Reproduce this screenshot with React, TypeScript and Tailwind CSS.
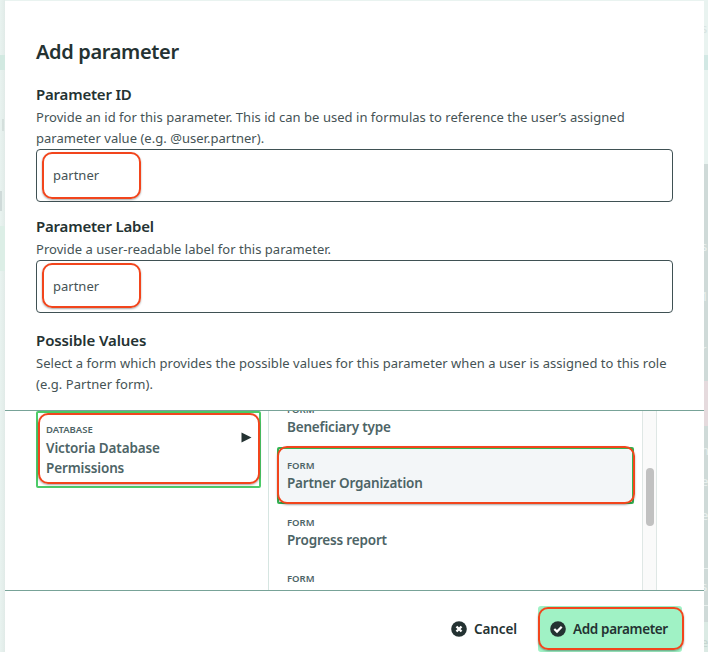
import React, { useState } from 'react';

const FORMS = ['Beneficiary type', 'Partner Organization', 'Progress report', 'Reporting period'];

// Slivers of the page that stay visible on both sides of the dialog
const RIGHT_LABELS = [
  { text: 's', className: 'top-[18px] text-[#d8e3e1]' },
  { text: 's', className: 'top-[236px] text-[#e9f0ee]' },
  { text: '1', className: 'top-[286px] text-[#e9f0ee]' },
  { text: 'r', className: 'top-[339px] text-[#e9f0ee]' },
  { text: 'n', className: 'top-[440px] text-[#e9f0ee]' },
  { text: 'e', className: 'top-[471px] text-[#e9f0ee]' },
  { text: 'e', className: 'top-[505px] text-[#e9f0ee]' },
  { text: 's', className: 'top-[576px] text-[#e9f0ee]' },
  { text: 'e', className: 'top-[632px] text-[#c6d5d0]' },
];

// Red rounded outline used to call out a part of the dialog
function Highlight({ className }: { className: string }) {
  return (
    <div
      className={`pointer-events-none absolute border-2 border-[#f2451c] shadow-[0_1px_2px_rgba(0,0,0,0.35)] ${className}`}
    />
  );
}

interface FieldProps {
  title: string;
  children: React.ReactNode;
  value: string;
  onChange: (value: string) => void;
  highlightClass: string;
}

function Field({ title, children, value, onChange, highlightClass }: FieldProps) {
  return (
    <section>
      <h2 className="text-[15px] leading-6 font-semibold tracking-[-0.2px] text-[#243232]">{title}</h2>
      <p className="pt-px text-[13px] leading-[21px] tracking-[0.03px] whitespace-nowrap text-[#455355]">{children}</p>
      <div className="relative h-[53px] rounded border border-[#3f5154]">
        <input
          type="text"
          value={value}
          onChange={(e) => onChange(e.target.value)}
          className="h-[50px] w-full bg-transparent px-4 text-[13px] text-[#455355] outline-none"
        />
        <Highlight className={highlightClass} />
      </div>
    </section>
  );
}

function App() {
  const [id, setId] = useState('partner');
  const [label, setLabel] = useState('partner');
  const [selected, setSelected] = useState('Partner Organization');

  return (
    <div className="flex h-[652px] w-[708px] overflow-hidden bg-[#e9f3f0] font-['Noto_Sans',sans-serif]">
      <div className="flex w-[5px] shrink-0 flex-col bg-gradient-to-r from-[#e9f3f0] to-[#e1ebe8]">
        <div className="mt-[55px] h-[15px] bg-[#d2e9e1]" />
        <div className="mt-[49px] ml-[2px] h-[12px] w-[2px] bg-[#d4dfdc]" />
        <div className="mt-[60px] h-[20px] w-[2px] bg-[#cfdad9]" />
        <div className="mt-[15px] h-[45px] bg-[#dceee6]" />
      </div>
      <div className="mt-px flex w-[699px] shrink-0 flex-col bg-white">
        <div className="h-[409px] px-[31px] pt-[37px]">
          <h1 className="text-[20px] leading-7 font-semibold tracking-[-0.35px] text-[#243232]">Add parameter</h1>
          <div className="mt-[16px]">
            <Field title="Parameter ID" value={id} onChange={setId} highlightClass="top-[2px] left-[5px] h-[47px] w-[99px] rounded-[10px]">
              Provide an id for this parameter. This id can be used in formulas to reference the user’s assigned
              <br />
              parameter value (e.g. @user.partner).
            </Field>
          </div>
          <div className="mt-[12px]">
            <Field title="Parameter Label" value={label} onChange={setLabel} highlightClass="top-[2px] left-[5px] h-[45px] w-[99px] rounded-[10px]">
              Provide a user-readable label for this parameter.
            </Field>
          </div>
          <h2 className="mt-[15px] text-[15px] leading-6 font-semibold tracking-[-0.1px] text-[#243232]">Possible Values</h2>
          <p className="pt-px text-[13px] leading-[21px] tracking-[0.04px] whitespace-nowrap text-[#455355]">
            Select a form which provides the possible values for this parameter when a user is assigned to this role
            <br />
            (e.g. Partner form).
          </p>
        </div>

        {/* Form picker */}
        <div className="flex h-[181px] shrink-0 overflow-hidden border-y border-[#78a398] pl-[31px]">
          <div className="relative h-[77px] w-[225px] shrink-0 rounded-[2px] border-2 border-[#4ccb68] pt-[9px] pl-[8px]">
            <div className="text-[9.5px] leading-4 font-semibold text-[#4d6466]">DATABASE</div>
            <div className="text-[13.5px] leading-5 font-semibold tracking-[-0.13px] text-[#4d6466]">
              Victoria Database
              <br />
              Permissions
            </div>
            <svg className="absolute top-[19px] right-[7px]" width="11" height="11" viewBox="0 0 11 11">
              <path d="M0.5 0.5L10.5 5.5L0.5 10.5Z" fill="#243232" />
            </svg>
            <Highlight className="top-0 left-0 h-[71px] w-[222px] rounded-[10px]" />
          </div>
          <div className="ml-[7px] w-[374px] shrink-0 overflow-hidden border-l border-[#d6e5e1] pl-[8px]">
            <div className="-mt-[20px]">
              {FORMS.map((form) => (
                <button
                  key={form}
                  onClick={() => setSelected(form)}
                  className={`relative block h-[56.3px] w-[357px] rounded-[2px] border-2 pt-[8px] pb-[8px] pl-[8px] text-left ${
                    form === selected ? 'border-[#35b553] bg-[#f3f6f8]' : 'border-transparent'
                  }`}
                >
                  <div className="text-[9.5px] leading-4 font-semibold text-[#4d6466]">FORM</div>
                  <div className="-mt-px -mb-px text-[13.5px] leading-5 font-semibold tracking-[-0.18px] text-[#4d6466]">{form}</div>
                  {form === selected && <Highlight className="-top-[3px] -left-[2px] h-[58px] w-[358px] rounded-[10px]" />}
                </button>
              ))}
            </div>
          </div>
          <div className="w-[15px] shrink-0 border-r border-l border-[#dfe7e5] bg-[#fafafa] pt-[57px]">
            <div className="ml-[3px] h-[58px] w-2 rounded-full bg-[#c1c1c1]" />
          </div>
        </div>

        <div className="flex h-[61px] shrink-0 items-start justify-end pt-[15px] pr-[22px]">
          <button className="mt-[12px] mr-[21px] flex items-center gap-[7px] text-[13.5px] leading-[22px] font-semibold tracking-[-0.1px] text-[#243232]">
            <svg width="16" height="16" viewBox="0 0 16 16" fill="none">
              <circle cx="8" cy="8" r="7.8" fill="#243232" />
              <path d="M5.5 5.5L10.5 10.5M10.5 5.5L5.5 10.5" stroke="white" strokeWidth="2.4" />
            </svg>
            Cancel
          </button>
          <button className="relative flex h-[46px] w-[144px] items-center gap-[7px] rounded-[3px] bg-[#a0f2c5] pl-[12px] text-[13.5px] font-semibold tracking-[-0.35px] whitespace-nowrap text-[#243232]">
            <svg width="16" height="16" viewBox="0 0 16 16" fill="none">
              <circle cx="8" cy="8" r="7.8" fill="#243232" />
              <path d="M4.3 8L7 10.6L11.7 5.7" stroke="white" strokeWidth="2.2" />
            </svg>
            Add parameter
            <Highlight className="top-[1px] left-0 h-[43px] w-[146px] rounded-[10px]" />
          </button>
        </div>
      </div>
      <div className="relative flex flex-1 flex-col overflow-hidden">
        <div className="mt-[55px] h-[15px] bg-[#d2e8e4]" />
        <div className="mt-[94px] h-[217px] bg-[#cfdad8]" />
        <div className="h-[45px] bg-[#e5dadd]" />
        <div className="h-[142px] bg-[#cfdad8]" />
        <div className="h-px bg-[#e9f0ee]" />
        <div className="h-[36px] bg-[#cfdad8]" />
        <div className="h-px bg-[#e9f0ee]" />
        <div className="h-[16px] bg-[#cfdad8]" />
        <div className="flex-1 bg-[#dbeae4]" />
        {RIGHT_LABELS.map((item, index) => (
          <span key={index} className={`absolute -left-[3px] text-[13px] leading-5 ${item.className}`}>
            {item.text}
          </span>
        ))}
      </div>
    </div>
  );
}

export default App;
